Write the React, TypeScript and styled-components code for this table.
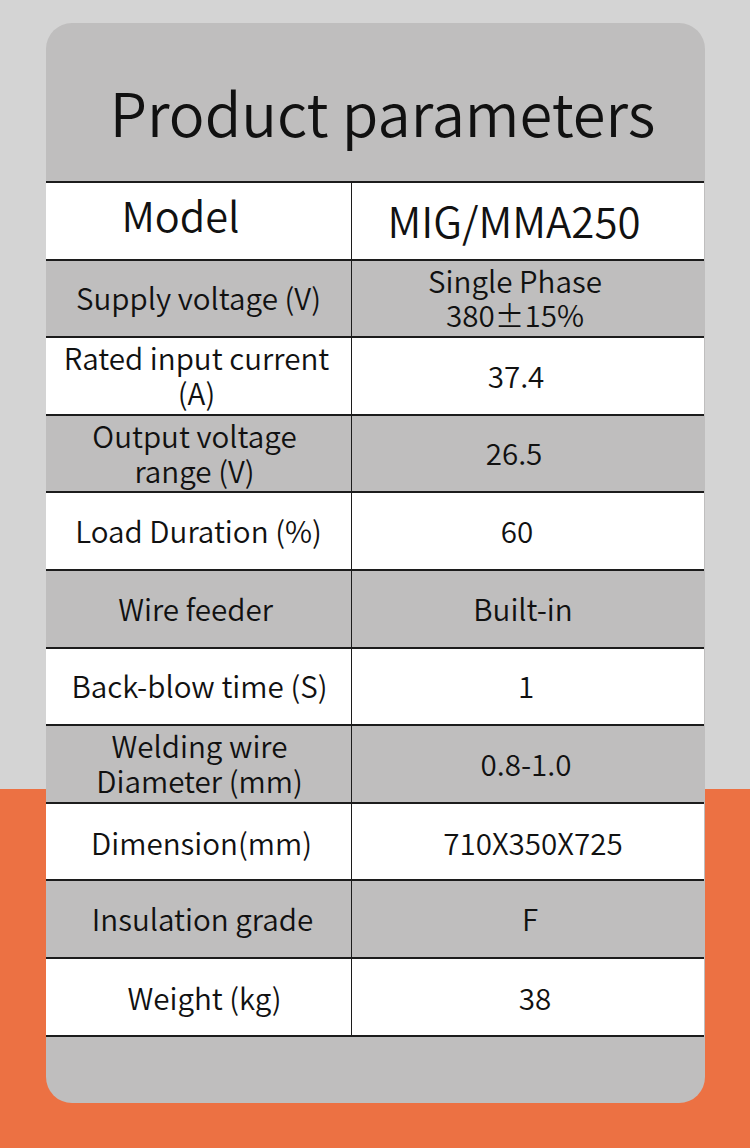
import styled, { createGlobalStyle } from "styled-components";

const GlobalStyle = createGlobalStyle`
  html, body {
    margin: 0;
    padding: 0;
  }
  body {
    font-family: "Noto Sans CJK SC", "Noto Sans", sans-serif;
    color: #111;
  }
`;

type Param = {
  label: string[];
  value: string[];
  labelShift?: number;
  valueShift?: number;
  dy?: number;
};

const params: Param[] = [
  { label: ["Supply voltage (V)"], value: ["Single Phase", "380±15%"], valueShift: -13 },
  { label: ["Rated input current", "(A)"], value: ["37.4"], labelShift: -2, valueShift: -12 },
  { label: ["Output voltage", "range (V)"], value: ["26.5"], labelShift: -4, valueShift: -14 },
  { label: ["Load Duration (%)"], value: ["60"], valueShift: -11 },
  { label: ["Wire feeder"], value: ["Built-in"], labelShift: -3, valueShift: -5 },
  { label: ["Back-blow time (S)"], value: ["1"], labelShift: 1, valueShift: -2 },
  { label: ["Welding wire", "Diameter (mm)"], value: ["0.8-1.0"], labelShift: 1, valueShift: -2 },
  { label: ["Dimension(mm)"], value: ["710X350X725"], labelShift: 3, valueShift: 5, dy: 2 },
  { label: ["Insulation grade"], value: ["F"], labelShift: 4, valueShift: 2 },
  { label: ["Weight (kg)"], value: ["38"], labelShift: 6, valueShift: 7, dy: 2 },
];

const Page = styled.div`
  width: 750px;
  height: 1148px;
  box-sizing: border-box;
  padding-top: 23px;
  overflow: hidden;
  background: linear-gradient(to bottom, #d4d4d4 789px, #ec7143 789px);
`;

const Card = styled.div`
  margin-left: 46px;
  width: 659px;
  height: 1080px;
  border-radius: 26px;
  background: #bfbebe;
  display: flex;
  flex-direction: column;
`;

const TitleBar = styled.div`
  height: 158px;
  box-sizing: border-box;
  padding: 59px 0 0 14px;
  text-align: center;
`;

const Title = styled.h1`
  margin: 0;
  font-size: 59.5px;
  font-weight: 350;
  line-height: 1;
  color: #111;
`;

const Table = styled.div`
  border-top: 2px solid #1c1c1c;
  margin-right: 1px;
`;

const Row = styled.div<{ $white: boolean }>`
  display: grid;
  grid-template-columns: 305px 1fr;
  height: 77.6px;
  box-sizing: border-box;
  border-bottom: 2px solid #1c1c1c;
  background: ${(p) => (p.$white ? "#ffffff" : "transparent")};
`;

const Cell = styled.div<{ $shift?: number; $dy?: number; $size?: number; $divider?: boolean }>`
  display: flex;
  flex-direction: column;
  align-items: center;
  justify-content: center;
  text-align: center;
  font-size: ${(p) => p.$size ?? 29.6}px;
  font-weight: 350;
  line-height: 34.5px;
  white-space: nowrap;
  border-left: ${(p) => (p.$divider ? "1.5px solid #1c1c1c" : "none")};
  padding-left: ${(p) => Math.max(0, 2 * (p.$shift ?? 0))}px;
  padding-right: ${(p) => Math.max(0, -2 * (p.$shift ?? 0))}px;
  padding-top: ${(p) => Math.max(0, 2 * (p.$dy ?? 0))}px;
  padding-bottom: ${(p) => Math.max(0, -2 * (p.$dy ?? 0))}px;
`;

export default function App() {
  return (
    <>
      <GlobalStyle />
      <Page>
        <Card>
          <TitleBar>
            <Title>Product parameters</Title>
          </TitleBar>
          <Table>
            <Row $white>
              <Cell $size={41.5} $shift={-18} $dy={-6.5}>
                Model
              </Cell>
              <Cell $size={42} $shift={-14} $dy={-1} $divider>
                MIG/MMA250
              </Cell>
            </Row>
            {params.map((p, i) => (
              <Row key={i} $white={i % 2 === 1}>
                <Cell $shift={p.labelShift} $dy={p.dy}>
                  {p.label.map((l) => (
                    <span key={l}>{l}</span>
                  ))}
                </Cell>
                <Cell $shift={p.valueShift} $dy={p.dy} $divider>
                  {p.value.map((v) => (
                    <span key={v}>{v}</span>
                  ))}
                </Cell>
              </Row>
            ))}
          </Table>
        </Card>
      </Page>
    </>
  );
}
